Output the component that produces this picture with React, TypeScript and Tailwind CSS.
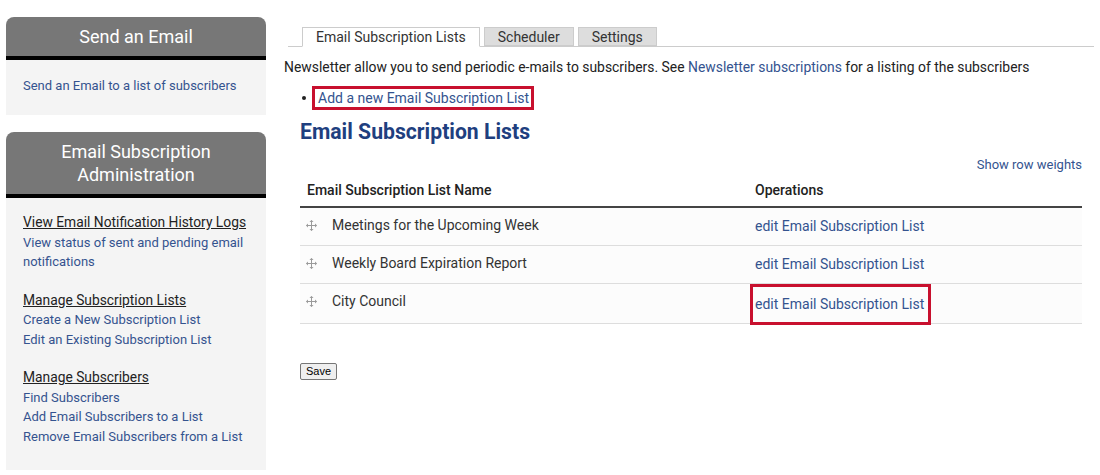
import React from 'react';

const linkColor = 'text-[#34538f]';

const DragIcon = () => (
  <svg width="11" height="11" viewBox="0 0 11 11" className="shrink-0">
    <g stroke="#9a9a9a" strokeWidth="1" fill="none">
      <path d="M5.5 0.5v10M0.5 5.5h10" />
    </g>
    <g fill="#9a9a9a">
      <path d="M5.5 0l-2 2h4z" />
      <path d="M5.5 11l-2-2h4z" />
      <path d="M0 5.5l2-2v4z" />
      <path d="M11 5.5l-2-2v4z" />
    </g>
  </svg>
);

const SideBox = ({ title, children }: { title: React.ReactNode; children: React.ReactNode }) => (
  <div className="w-[260px]">
    <div className="bg-[#777777] rounded-t-[8px] text-white text-[18px] leading-[23px] text-center px-4 py-[8px] border-b-[4px] border-black">
      {title}
    </div>
    <div className="bg-[#f4f4f4] pl-[17px] pr-[8px]">{children}</div>
  </div>
);

const rows = ['Meetings for the Upcoming Week', 'Weekly Board Expiration Report', 'City Council'];

export default function App() {
  return (
    <div className="w-[1100px] h-[475px] bg-white flex overflow-hidden" style={{ fontFamily: 'Roboto, "Liberation Sans", sans-serif' }}>
      {/* Sidebar */}
      <aside className="ml-[6px] mt-[17px] flex flex-col gap-[17px]">
        <SideBox title="Send an Email">
          <div className="pt-[16px] pb-[20px] text-[13px] leading-[19px]">
            <a className={linkColor}>Send an Email to a list of subscribers</a>
          </div>
        </SideBox>
        <SideBox title={<>Email Subscription<br />Administration</>}>
          <div className="pt-[15px] pb-[20px] text-[13px] leading-[19.5px] h-[272px]">
            <div className="text-[13.8px] text-[#222] underline whitespace-nowrap">View Email Notification History Logs</div>
            <div className={linkColor}>View status of sent and pending email notifications</div>
            <div className="mt-[19px] text-[13.8px] text-[#222] underline">Manage Subscription Lists</div>
            <div className={linkColor}>Create a New Subscription List</div>
            <div className={linkColor}>Edit an Existing Subscription List</div>
            <div className="mt-[19px] text-[13.8px] text-[#222] underline">Manage Subscribers</div>
            <div className={linkColor}>Find Subscribers</div>
            <div className={linkColor}>Add Email Subscribers to a List</div>
            <div className={linkColor}>Remove Email Subscribers from a List</div>
          </div>
        </SideBox>
      </aside>

      {/* Main */}
      <main className="ml-[18px] w-[810px] pt-[27px]">
        <div className="ml-[4px] flex items-end border-b border-[#cccccc] pl-[14px] gap-[4px]">
          <div className="border border-[#cccccc] border-b-white -mb-px bg-white px-[13px] h-[20px] text-[14px] leading-[19px] text-[#333]">
            Email Subscription Lists
          </div>
          <div className="border border-[#cccccc] bg-[#dddddd] px-[13px] h-[19px] text-[14px] leading-[18px] text-[#333]">
            Scheduler
          </div>
          <div className="border border-[#cccccc] bg-[#dddddd] px-[13px] h-[19px] text-[14px] leading-[18px] text-[#333]">
            Settings
          </div>
        </div>

        <p className="mt-[10px] text-[13.9px] leading-[20px] text-[#222] whitespace-nowrap">
          Newsletter allow you to send periodic e-mails to subscribers. See{' '}
          <a className={linkColor}>Newsletter subscriptions</a> for a listing of the subscribers
        </p>

        <div className="ml-[16px]">
          <ul className="mt-[9px] flex items-center">
            <li className="flex items-center">
              <span className="w-[4px] h-[4px] rounded-full bg-[#222] ml-[2px] mr-[6px]" />
              <span className="border-[3px] border-[#c8102e] pl-[3px] pr-[2px] h-[24px] flex items-center text-[14px] whitespace-nowrap">
                <a className={linkColor}>Add a new Email Subscription List</a>
              </span>
            </li>
          </ul>

          <h2 className="mt-[10px] text-[21.2px] leading-[24px] font-bold text-[#1f3f7f]">Email Subscription Lists</h2>

          <div className="w-[782px]">
            <div className="mt-[12px] text-right text-[13px] leading-[17px]">
              <a className={linkColor}>Show row weights</a>
            </div>

            <table className="mt-[3px] w-full border-collapse text-[14px]">
              <thead>
                <tr className="border-b-2 border-[#444]">
                  <th className="text-left font-medium text-[#222] pl-[7px] h-[31px] w-[448px] pb-[2px]">Email Subscription List Name</th>
                  <th className="text-left font-medium text-[#222] pl-[7px] pb-[2px]">Operations</th>
                </tr>
              </thead>
              <tbody className="bg-[#fcfcfc]">
                {rows.map((name, i) => (
                  <tr key={name} className="border-b border-[#dddddd] h-[38px]">
                    <td className="pl-[6px] align-top pt-[7px]">
                      <div className="flex items-center gap-[15px] text-[#333]">
                        <DragIcon />
                        <span>{name}</span>
                      </div>
                    </td>
                    <td className="align-middle p-0">
                      {i === 2 ? (
                        <span className="inline-flex items-center h-[41px] -my-[1px] translate-y-[1px] border-[3px] border-[#c8102e] pl-[2px] w-[181px] ml-[2px] whitespace-nowrap">
                          <a className={`${linkColor} pt-[1px]`}>edit Email Subscription List</a>
                        </span>
                      ) : (
                        <a className={`${linkColor} pl-[7px] inline-block pt-[1px] whitespace-nowrap`}>edit Email Subscription List</a>
                      )}
                    </td>
                  </tr>
                ))}
              </tbody>
            </table>

            <button className="mt-[39px] border border-[#767676] rounded-[2px] bg-[#efefef] px-[5px] h-[17px] text-[11px] leading-[15px] text-black" style={{ fontFamily: '"Liberation Sans", Arial, sans-serif' }}>
              Save
            </button>
          </div>
        </div>
      </main>
    </div>
  );
}
